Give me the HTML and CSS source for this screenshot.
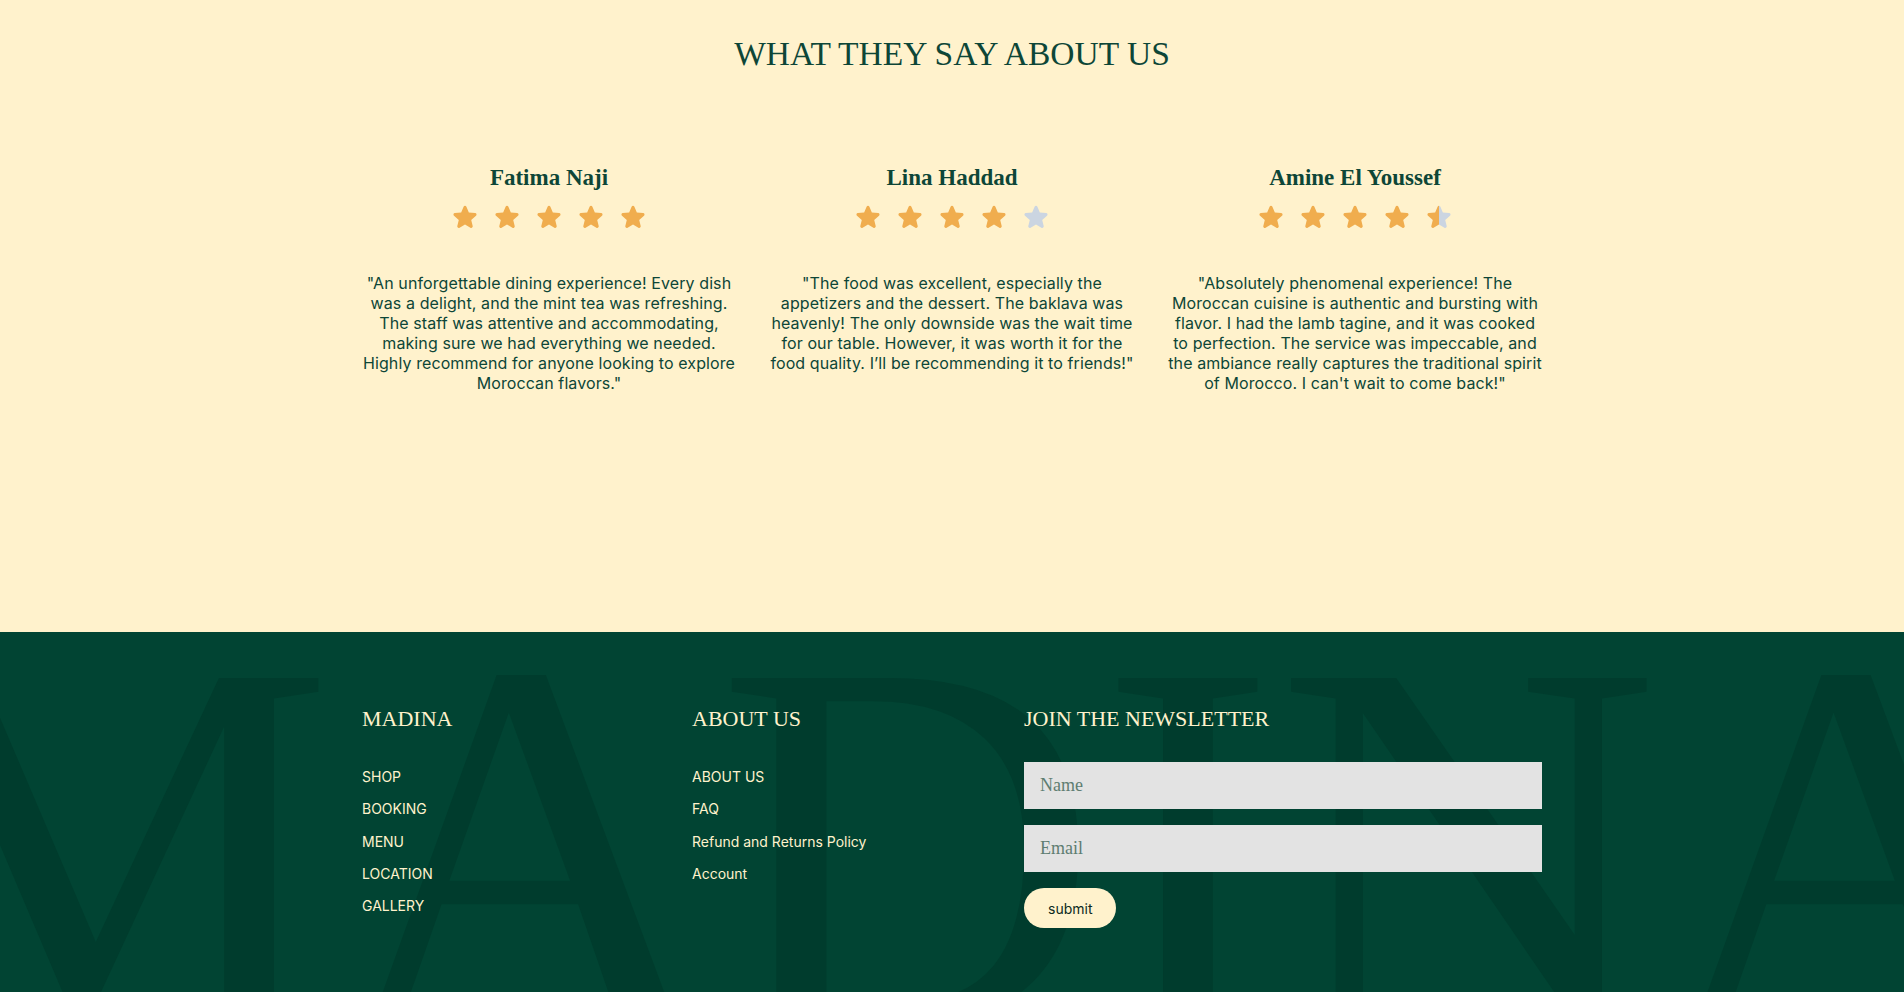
FILE: index.html
```html
<!DOCTYPE html>
<html lang="en">
<head>
<meta charset="utf-8">
<title>Madina — Testimonials</title>
<link rel="stylesheet" href="styles.css">
</head>
<body>
<svg class="defs" width="0" height="0" aria-hidden="true">
  <defs>
    <linearGradient id="half-fill" x1="0" y1="0" x2="1" y2="0">
      <stop offset="0.5" stop-color="#F0AD4E"/>
      <stop offset="0.5" stop-color="#CBD5E1"/>
    </linearGradient>
    <symbol id="star" viewBox="0 0 24 24">
      <path fill-rule="evenodd" clip-rule="evenodd" d="M10.788 3.21c.448-1.077 1.976-1.077 2.424 0l2.082 5.006 5.404.434c1.164.093 1.636 1.545.749 2.305l-4.117 3.527 1.257 5.273c.271 1.136-.964 2.033-1.96 1.425L12 18.354 7.373 21.18c-.996.608-2.231-.29-1.960-1.425l1.257-5.273-4.117-3.527c-.887-.76-.415-2.212.749-2.305l5.404-.434 2.082-5.005Z"/>
    </symbol>
  </defs>
</svg>

<section class="testimonials">
  <h2 class="section-title">WHAT THEY SAY ABOUT US</h2>
  <div class="reviews">
    <article class="review">
      <h3 class="review-name">Fatima Naji</h3>
      <div class="stars">
        <svg class="star"><use href="#star"/></svg>
        <svg class="star"><use href="#star"/></svg>
        <svg class="star"><use href="#star"/></svg>
        <svg class="star"><use href="#star"/></svg>
        <svg class="star"><use href="#star"/></svg>
      </div>
      <p class="review-text">"An unforgettable dining experience! Every dish was a delight, and the mint tea was refreshing. The staff was attentive and accommodating, making sure we had everything we needed. Highly recommend for anyone looking to explore Moroccan flavors."</p>
    </article>
    <article class="review">
      <h3 class="review-name">Lina Haddad</h3>
      <div class="stars">
        <svg class="star"><use href="#star"/></svg>
        <svg class="star"><use href="#star"/></svg>
        <svg class="star"><use href="#star"/></svg>
        <svg class="star"><use href="#star"/></svg>
        <svg class="star empty"><use href="#star"/></svg>
      </div>
      <p class="review-text">"The food was excellent, especially the appetizers and the dessert. The baklava was heavenly! The only downside was the wait time for our table. However, it was worth it for the food quality. I’ll be recommending it to friends!"</p>
    </article>
    <article class="review">
      <h3 class="review-name">Amine El Youssef</h3>
      <div class="stars">
        <svg class="star"><use href="#star"/></svg>
        <svg class="star"><use href="#star"/></svg>
        <svg class="star"><use href="#star"/></svg>
        <svg class="star"><use href="#star"/></svg>
        <svg class="star half"><use href="#star"/></svg>
      </div>
      <p class="review-text">"Absolutely phenomenal experience! The Moroccan cuisine is authentic and bursting with flavor. I had the lamb tagine, and it was cooked to perfection. The service was impeccable, and the ambiance really captures the traditional spirit of Morocco. I can't wait to come back!"</p>
    </article>
  </div>
</section>

<footer class="site-footer">
  <div class="footer-watermark" aria-hidden="true">MADINA</div>
  <div class="footer-inner">
    <div class="footer-col">
      <h4 class="footer-title">MADINA</h4>
      <ul class="footer-links">
        <li><a href="#">SHOP</a></li>
        <li><a href="#">BOOKING</a></li>
        <li><a href="#">MENU</a></li>
        <li><a href="#">LOCATION</a></li>
        <li><a href="#">GALLERY</a></li>
      </ul>
    </div>
    <div class="footer-col">
      <h4 class="footer-title">ABOUT US</h4>
      <ul class="footer-links">
        <li><a href="#">ABOUT US</a></li>
        <li><a href="#">FAQ</a></li>
        <li><a href="#">Refund and Returns Policy</a></li>
        <li><a href="#">Account</a></li>
      </ul>
    </div>
    <div class="footer-col newsletter">
      <h4 class="footer-title">JOIN THE NEWSLETTER</h4>
      <form class="newsletter-form">
        <input class="field" type="text" placeholder="Name">
        <input class="field" type="email" placeholder="Email">
        <button class="submit-btn" type="button">submit</button>
      </form>
    </div>
  </div>
</footer>
</body>
</html>
```

FILE: styles.css
```css
html, body {
  margin: 0;
  padding: 0;
}

body {
  background: #FFF2CC;
  color: #0d4637;
  font-family: "Inter", "Liberation Sans", sans-serif;
}

.defs {
  position: absolute;
  width: 0;
  height: 0;
  overflow: hidden;
}

/* ---------- Testimonials ---------- */
.testimonials {
  background: #FFF2CC;
  min-height: 632px;
  box-sizing: border-box;
  padding-top: 35px;
}

.section-title {
  margin: 0;
  text-align: center;
  font-family: "Liberation Serif", serif;
  font-weight: 400;
  font-size: 33.5px;
  line-height: 37px;
  color: #0d4637;
}

.reviews {
  width: 1182px;
  margin: 93px auto 0;
  display: grid;
  grid-template-columns: repeat(3, 376px);
  column-gap: 27px;
}

.review {
  text-align: center;
}

.review-name {
  margin: 0;
  font-family: "Liberation Serif", serif;
  font-weight: 700;
  font-size: 23px;
  line-height: 25px;
  color: #0d4637;
}

.stars {
  display: flex;
  justify-content: center;
  gap: 14px;
  margin-top: 13px;
}

.star {
  width: 28px;
  height: 28px;
  fill: #F0AD4E;
}

.star.empty {
  fill: #CBD5E1;
}

.star.half {
  fill: url(#half-fill);
}

.review-text {
  margin: 42px 0 0;
  font-size: 16px;
  line-height: 20px;
  letter-spacing: 0.1px;
  color: #0d4637;
}

/* ---------- Footer ---------- */
.site-footer {
  position: relative;
  overflow: hidden;
  background: #014433;
  min-height: 420px;
  box-sizing: border-box;
  padding-top: 74px;
}

.footer-watermark {
  position: absolute;
  top: -50px;
  left: 50%;
  transform: translateX(-50%);
  font-family: "Liberation Serif", serif;
  font-size: 530px;
  line-height: 1;
  color: #003c2d;
  white-space: nowrap;
  pointer-events: none;
}

.footer-inner {
  position: relative;
  width: 1180px;
  margin: 0 auto;
  display: grid;
  grid-template-columns: 300px 302px 1fr;
  column-gap: 30px;
}

.footer-title {
  margin: 0 0 30px;
  font-family: "Liberation Serif", serif;
  font-weight: 400;
  font-size: 22px;
  line-height: normal;
  color: #FFF2CC;
}

.footer-links {
  list-style: none;
  margin: 0;
  padding: 5px 0 0;
}

.footer-links li {
  font-size: 14px;
  line-height: 20px;
  margin-bottom: 12.25px;
}

.footer-links a {
  color: #FFF2CC;
  text-decoration: none;
}

.newsletter-form {
  display: flex;
  flex-direction: column;
  align-items: flex-start;
  gap: 16px;
}

.field {
  display: block;
  width: 100%;
  height: 47px;
  box-sizing: border-box;
  border: 0;
  border-radius: 0;
  background: #E3E3E3;
  padding: 0 16px;
  font-family: "Liberation Serif", serif;
  font-size: 18px;
  color: #0d4637;
  outline: none;
}

.field::placeholder {
  color: #5e7d71;
}

.submit-btn {
  height: 40px;
  padding: 0 24px;
  border: 0;
  border-radius: 20px;
  background: #FFF2CC;
  color: #0b2a22;
  font-family: "Inter", "Liberation Sans", sans-serif;
  font-size: 14px;
  cursor: pointer;
}
```
